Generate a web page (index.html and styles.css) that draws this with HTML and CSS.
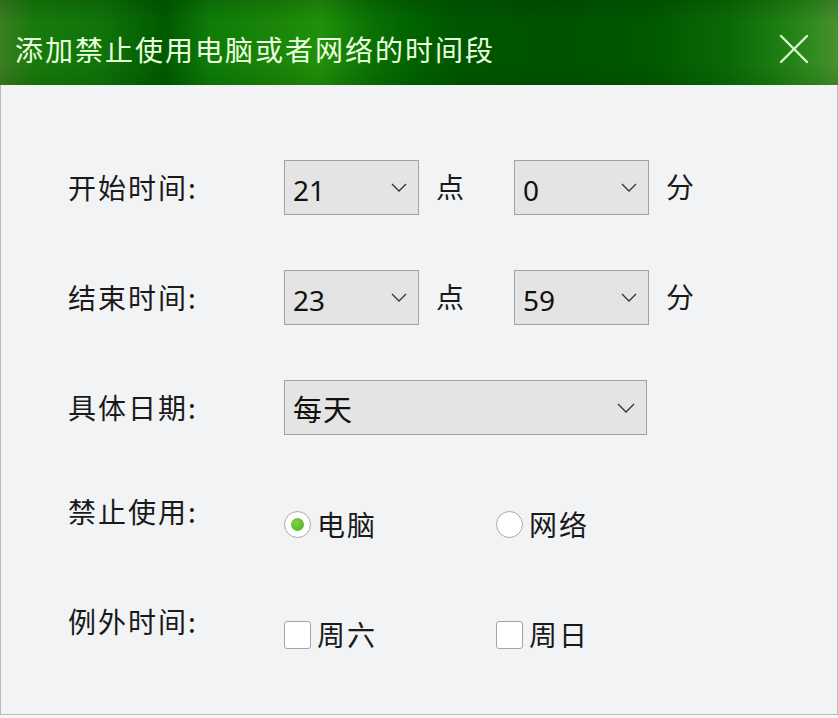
FILE: index.html
```html
<!DOCTYPE html>
<html lang="zh-CN">
<head>
<meta charset="utf-8">
<title>添加禁止使用电脑或者网络的时间段</title>
<link rel="stylesheet" href="styles.css">
</head>
<body>
<div class="window">
  <header class="titlebar">
    <div class="title">添加禁止使用电脑或者网络的时间段</div>
    <svg class="close" width="30" height="30" viewBox="0 0 30 30" aria-label="关闭">
      <path d="M2 2 L28 28 M28 2 L2 28" stroke="#d8f6cc" stroke-width="2.4" stroke-linecap="round" fill="none"/>
    </svg>
  </header>
  <main class="content">
    <div class="row">
      <div class="label">开始时间:</div>
      <div class="controls">
        <div class="select small"><span class="val">21</span><svg class="chev" width="16" height="9" viewBox="0 0 16 9"><path d="M1 1 L8 8 L15 1" stroke="#333" stroke-width="1.3" fill="none"/></svg></div>
        <span class="unit">点</span>
        <div class="select small"><span class="val">0</span><svg class="chev" width="16" height="9" viewBox="0 0 16 9"><path d="M1 1 L8 8 L15 1" stroke="#333" stroke-width="1.3" fill="none"/></svg></div>
        <span class="unit">分</span>
      </div>
    </div>
    <div class="row">
      <div class="label">结束时间:</div>
      <div class="controls">
        <div class="select small"><span class="val">23</span><svg class="chev" width="16" height="9" viewBox="0 0 16 9"><path d="M1 1 L8 8 L15 1" stroke="#333" stroke-width="1.3" fill="none"/></svg></div>
        <span class="unit">点</span>
        <div class="select small"><span class="val">59</span><svg class="chev" width="16" height="9" viewBox="0 0 16 9"><path d="M1 1 L8 8 L15 1" stroke="#333" stroke-width="1.3" fill="none"/></svg></div>
        <span class="unit">分</span>
      </div>
    </div>
    <div class="row">
      <div class="label">具体日期:</div>
      <div class="controls">
        <div class="select wide"><span class="val cjk">每天</span><svg class="chev" width="18" height="10" viewBox="0 0 18 10"><path d="M1 1 L9 9 L17 1" stroke="#333" stroke-width="1.3" fill="none"/></svg></div>
      </div>
    </div>
    <div class="row">
      <div class="label raised">禁止使用:</div>
      <div class="controls lowered">
        <label class="opt"><span class="radio checked"></span><span>电脑</span></label>
        <label class="opt"><span class="radio"></span><span>网络</span></label>
      </div>
    </div>
    <div class="row">
      <div class="label raised">例外时间:</div>
      <div class="controls lowered">
        <label class="opt"><span class="check"></span><span>周六</span></label>
        <label class="opt"><span class="check"></span><span>周日</span></label>
      </div>
    </div>
  </main>
</div>
</body>
</html>
```
FILE: styles.css
```css
html, body {
  margin: 0;
  padding: 0;
  background: #f7f7f7;
}
body {
  font-family: "Noto Sans CJK SC", "Noto Sans", sans-serif;
  color: #1a1a1a;
}
.window {
  width: 838px;
  height: 715px;
  box-sizing: border-box;
  border-left: 1px solid #b9b9b9;
  border-right: 1px solid #b9b9b9;
  border-bottom: 1px solid #b9b9b9;
  background: #f2f3f5;
  display: flex;
  flex-direction: column;
}
.titlebar {
  height: 85px;
  flex: none;
  margin: 0 -1px;
  display: flex;
  align-items: center;
  padding: 0 29px 0 15px;
  background:
    linear-gradient(180deg, rgba(0,30,0,0.18) 0%, rgba(0,0,0,0) 25%, rgba(0,0,0,0) 75%, rgba(0,25,0,0.12) 100%),
    linear-gradient(90deg, #3b7d22 0px, #177a0a 35px, #0f740a 100px, #005a00 165px, #0e7c08 210px, #1b8608 280px, #21900a 320px, #0a7204 370px, #006400 410px, #005600 460px, #005300 560px, #005800 650px, #0a6a06 730px, #1b7c10 775px, #2e8a1c 810px, #4a9030 838px);
}
.title {
  color: #eaffdf;
  font-size: 28px;
  letter-spacing: 2px;
  line-height: 1;
  padding-top: 12px;
  white-space: nowrap;
}
.close {
  margin-left: auto;
  margin-top: 12px;
  display: block;
}
.content {
  padding: 75px 0 0 67px;
  display: flex;
  flex-direction: column;
  gap: 55px;
}
.row {
  display: flex;
  align-items: center;
  height: 55px;
}
.label {
  width: 216px;
  flex: none;
  font-size: 28px;
  letter-spacing: 2px;
  line-height: 1;
  padding-bottom: 2px;
}
.label.raised {
  padding-bottom: 14px;
}
.controls {
  display: flex;
  align-items: center;
}
.controls.lowered {
  padding-top: 14px;
}
.select {
  height: 55px;
  box-sizing: border-box;
  border: 1px solid #a2a2a2;
  background: #e4e4e4;
  display: flex;
  align-items: center;
  padding: 0 11px 0 8px;
}
.select.small {
  width: 135px;
}
.select.wide {
  width: 363px;
}
.val {
  font-family: "Noto Sans", "Noto Sans CJK SC", sans-serif;
  font-size: 28px;
  line-height: 1;
  color: #111;
  padding-top: 4px;
}
.val.cjk {
  font-family: "Noto Sans CJK SC", sans-serif;
  font-size: 29px;
  letter-spacing: 1px;
  font-weight: 400;
  padding-top: 2px;
}
.chev {
  margin-left: auto;
  display: block;
}
.unit {
  font-size: 28px;
  line-height: 1;
  margin: 0 48px 4px 17px;
  width: 30px;
}
.opt {
  display: flex;
  align-items: center;
  width: 212px;
  font-size: 28px;
  letter-spacing: 2px;
  line-height: 1;
}
.opt span:last-child {
  padding-bottom: 2px;
}
.radio {
  width: 27px;
  height: 27px;
  box-sizing: border-box;
  border: 1px solid #a9a9a9;
  border-radius: 50%;
  background: #ffffff;
  margin-right: 6px;
  display: flex;
  align-items: center;
  justify-content: center;
  flex: none;
}
.radio.checked::after {
  content: "";
  width: 13px;
  height: 13px;
  border-radius: 50%;
  background: radial-gradient(circle at 40% 35%, #7fd24a, #4fae1c);
}
.check {
  width: 27px;
  height: 28px;
  box-sizing: border-box;
  border: 1px solid #a4a4a4;
  border-radius: 3px;
  background: #ffffff;
  margin-right: 6px;
  flex: none;
}
```
